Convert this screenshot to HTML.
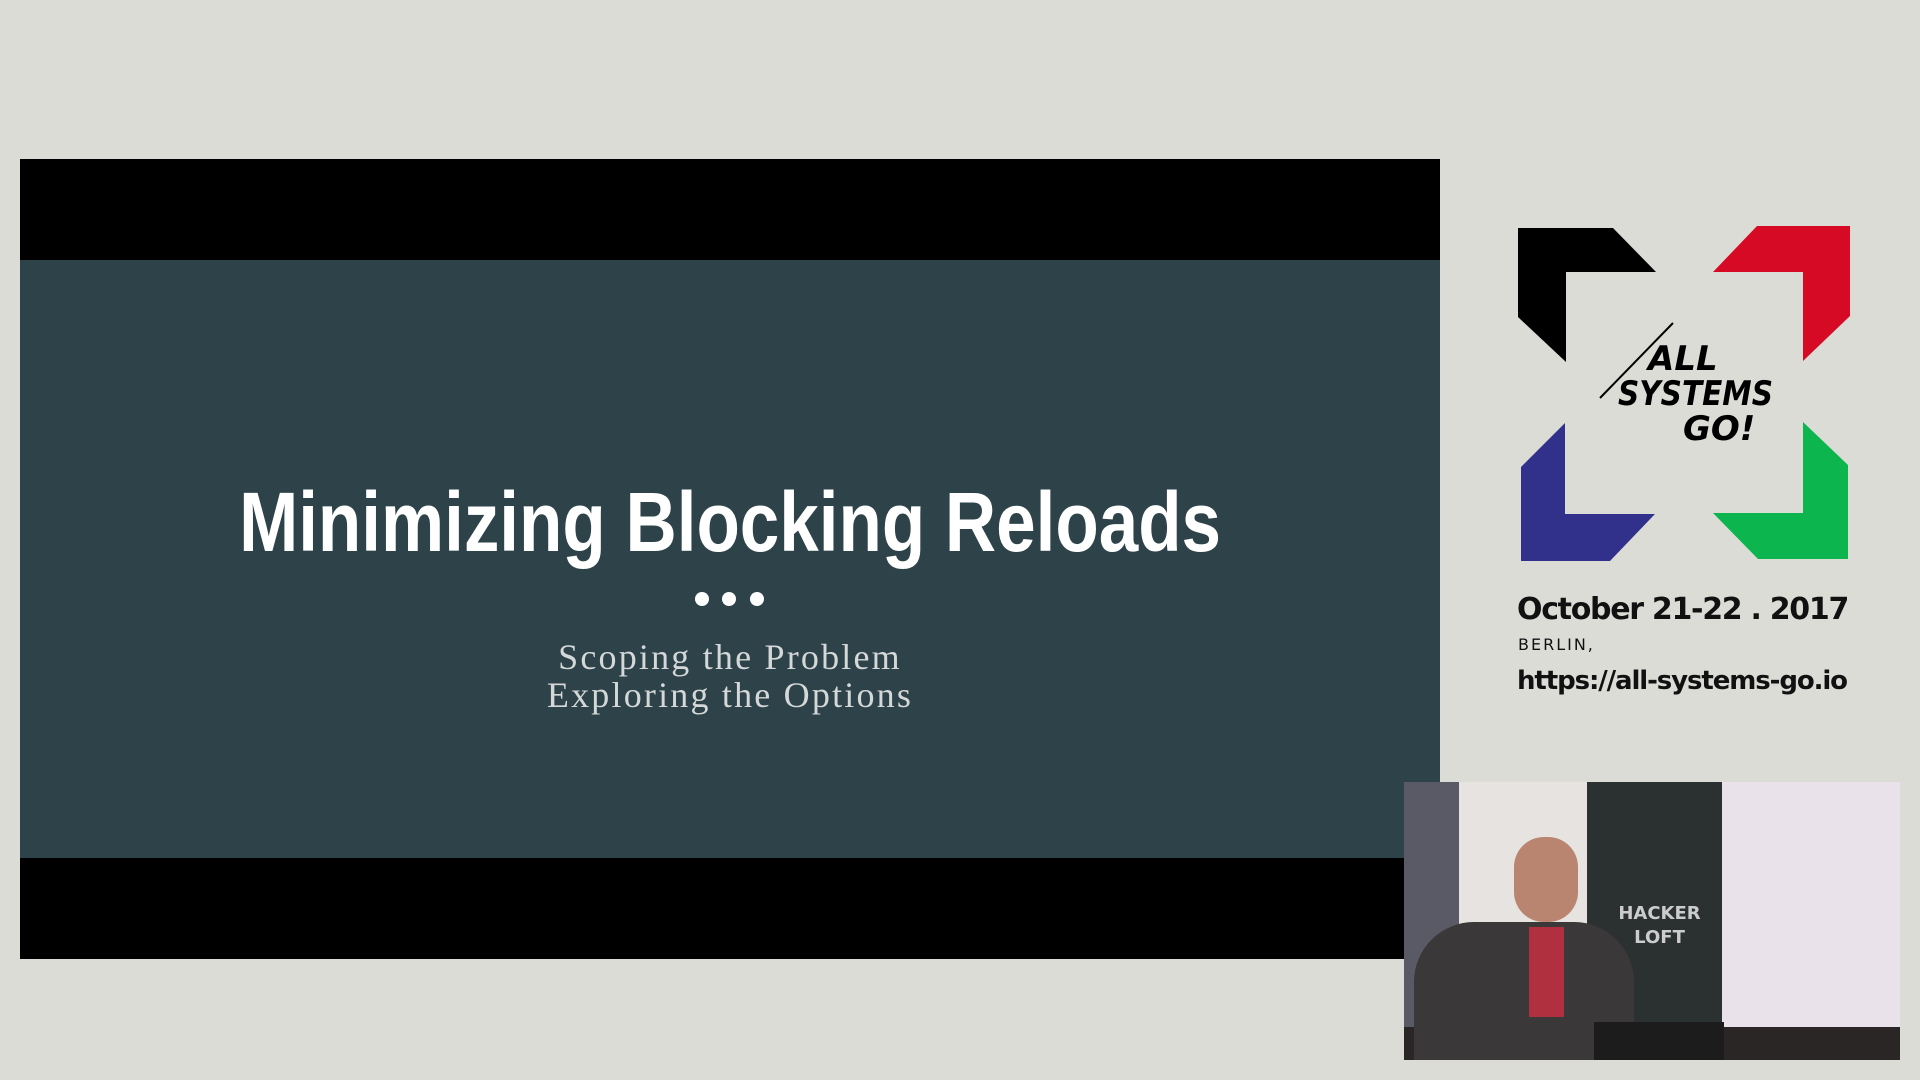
<!DOCTYPE html>
<html><head><style>
html,body{margin:0;padding:0;width:1920px;height:1080px;overflow:hidden;background:#dcdcd7;}
.slide{position:absolute;left:20px;top:159px;width:1420px;height:800px;background:#000;}
.teal{position:absolute;left:20px;top:260px;width:1420px;height:598px;background:#2e4249;}
.title{position:absolute;left:0;width:1460px;top:472px;text-align:center;color:#fff;font-family:"Liberation Sans",sans-serif;font-weight:bold;font-size:84px;line-height:100px;}
.title span{display:inline-block;transform:scaleX(0.845);transform-origin:center;}
.dot{position:absolute;top:592px;width:14px;height:14px;border-radius:50%;background:#fff;}
.sub{position:absolute;left:0;width:1460px;top:638px;text-align:center;color:#d4d8d8;font-family:"Liberation Serif",serif;font-size:36px;line-height:38px;letter-spacing:2.2px;}
.cam{position:absolute;left:1404px;top:782px;width:496px;height:278px;overflow:hidden;background:#e8e2e6;}
.txt{position:absolute;font-family:"DejaVu Sans","Liberation Sans",sans-serif;color:#111;font-weight:bold;white-space:nowrap;}
</style></head><body>
<div class="slide"></div>
<div class="teal"></div>
<div class="title"><span>Minimizing Blocking Reloads</span></div>
<div class="dot" style="left:695px"></div><div class="dot" style="left:722px"></div><div class="dot" style="left:750px"></div>
<div class="sub">Scoping the Problem<br>Exploring the Options</div>

<svg style="position:absolute;left:0;top:0" width="1920" height="1080">
<polygon fill="#000" points="1518,228 1613,228 1656,272 1566,272 1566,362 1518,317"/>
<polygon fill="#d60a24" points="1757,226 1850,226 1850,316 1803,361 1803,272 1713,272"/>
<polygon fill="#31308a" points="1521,467 1565,423 1565,514 1655,514 1610,561 1521,561"/>
<polygon fill="#0db54e" points="1803,422 1848,465 1848,559 1758,559 1713,513 1803,513"/>
<line x1="1600" y1="398" x2="1673" y2="323" stroke="#000" stroke-width="2"/>
<g font-family="DejaVu Sans, Liberation Sans, sans-serif" font-weight="bold" font-style="italic" font-size="34" fill="#000">
<text x="1648" y="370">ALL</text>
<text x="1618" y="405" textLength="155" lengthAdjust="spacingAndGlyphs">SYSTEMS</text>
<text x="1683" y="440">GO!</text>
</g>
</svg>
<div class="txt" style="left:1517px;top:592px;font-size:30px;letter-spacing:-1.3px;">October 21-22 . 2017</div>
<div class="txt" style="left:1518px;top:635px;font-size:16px;font-weight:normal;letter-spacing:2px;">BERLIN,</div>
<div class="txt" style="left:1517px;top:666px;font-size:26px;letter-spacing:-1.1px;">https://all-systems-go.io</div>

<div class="cam">
<div style="position:absolute;left:0;top:0;width:55px;height:278px;background:#5a5a66"></div>
<div style="position:absolute;left:55px;top:0;width:130px;height:278px;background:#e6e3e0"></div>
<div style="position:absolute;left:183px;top:0;width:135px;height:240px;background:#2b3130"></div>
<div style="position:absolute;left:208px;top:120px;font-family:'DejaVu Sans',sans-serif;font-weight:bold;color:#ccc;font-size:18px;line-height:24px;text-align:center;width:95px">HACKER<br>LOFT</div>
<div style="position:absolute;left:318px;top:0;width:178px;height:245px;background:#e9e2ea"></div>
<div style="position:absolute;left:0;top:245px;width:496px;height:33px;background:#2a2625"></div>
<div style="position:absolute;left:10px;top:140px;width:220px;height:140px;background:#3a3838;border-radius:60px 60px 0 0"></div>
<div style="position:absolute;left:125px;top:145px;width:35px;height:90px;background:#b03040"></div>
<div style="position:absolute;left:110px;top:55px;width:64px;height:85px;background:#b98470;border-radius:30px"></div>
<div style="position:absolute;left:190px;top:240px;width:130px;height:38px;background:#1c1c1c"></div>
</div>
</body></html>
